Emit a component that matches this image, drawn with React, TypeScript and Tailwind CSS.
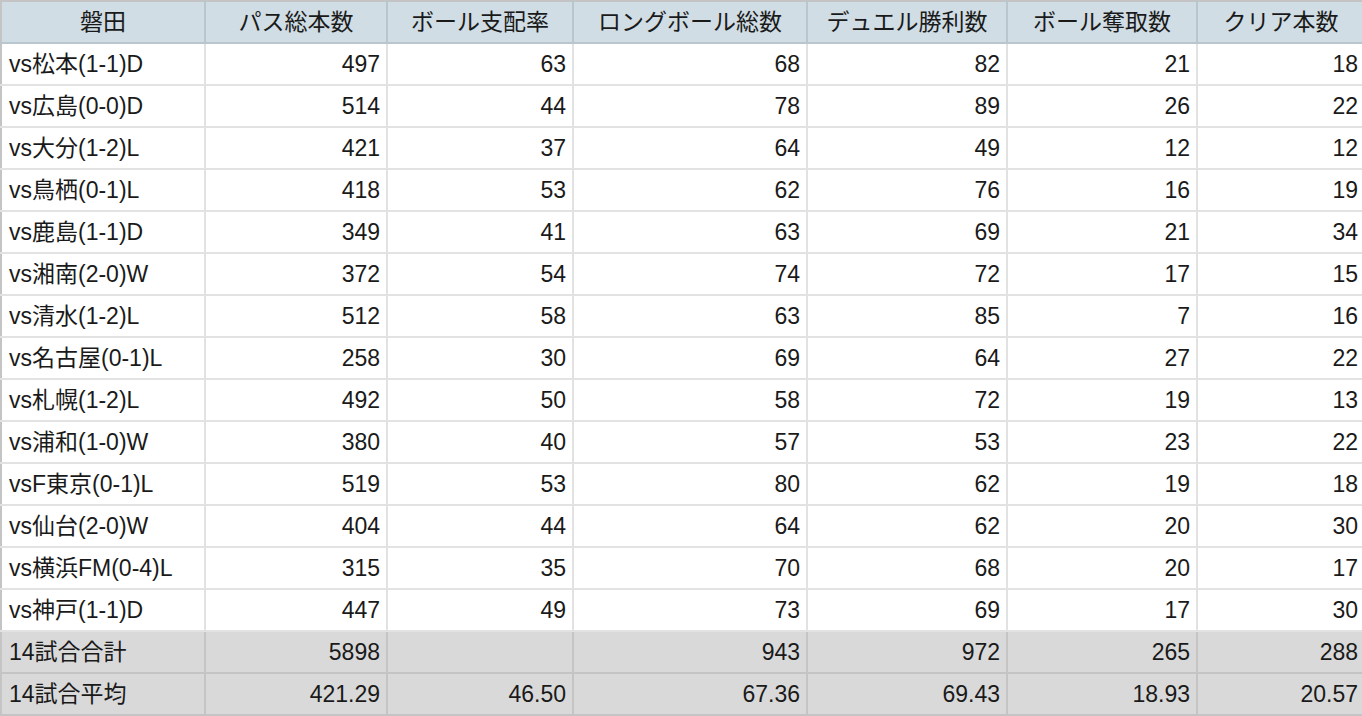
import React from 'react'

type Row = { name: string; vals: (string | number)[] }

const HEADERS = ['磐田', 'パス総本数', 'ボール支配率', 'ロングボール総数', 'デュエル勝利数', 'ボール奪取数', 'クリア本数']

const ROWS: Row[] = [
  { name: 'vs松本(1-1)D', vals: [497, 63, 68, 82, 21, 18] },
  { name: 'vs広島(0-0)D', vals: [514, 44, 78, 89, 26, 22] },
  { name: 'vs大分(1-2)L', vals: [421, 37, 64, 49, 12, 12] },
  { name: 'vs鳥栖(0-1)L', vals: [418, 53, 62, 76, 16, 19] },
  { name: 'vs鹿島(1-1)D', vals: [349, 41, 63, 69, 21, 34] },
  { name: 'vs湘南(2-0)W', vals: [372, 54, 74, 72, 17, 15] },
  { name: 'vs清水(1-2)L', vals: [512, 58, 63, 85, 7, 16] },
  { name: 'vs名古屋(0-1)L', vals: [258, 30, 69, 64, 27, 22] },
  { name: 'vs札幌(1-2)L', vals: [492, 50, 58, 72, 19, 13] },
  { name: 'vs浦和(1-0)W', vals: [380, 40, 57, 53, 23, 22] },
  { name: 'vsF東京(0-1)L', vals: [519, 53, 80, 62, 19, 18] },
  { name: 'vs仙台(2-0)W', vals: [404, 44, 64, 62, 20, 30] },
  { name: 'vs横浜FM(0-4)L', vals: [315, 35, 70, 68, 20, 17] },
  { name: 'vs神戸(1-1)D', vals: [447, 49, 73, 69, 17, 30] },
]

const FOOTER: Row[] = [
  { name: '14試合合計', vals: [5898, '', 943, 972, 265, 288] },
  { name: '14試合平均', vals: ['421.29', '46.50', '67.36', '69.43', '18.93', '20.57'] },
]

export default function App() {
  return (
    <div className="w-[1362px] h-[716px] overflow-hidden bg-white text-[#1a1a1a] font-['Liberation_Sans','Noto_Sans_CJK_JP',sans-serif] text-[23px]">
      <table className="table-fixed border-collapse w-[1364px]">
        <colgroup>
          <col className="w-[204px]" />
          <col className="w-[182px]" />
          <col className="w-[186px]" />
          <col className="w-[234px]" />
          <col className="w-[200px]" />
          <col className="w-[190px]" />
          <col className="w-[168px]" />
        </colgroup>
        <thead>
          <tr className="bg-[#d0dde4]">
            {HEADERS.map((h, i) => (
              <th
                key={i}
                className={`h-[42px] border-2 border-[#b9c6cd] border-t-[#c4c4c4] font-normal text-center p-0 ${i === 0 ? 'border-l-[#c4c4c4]' : ''}`}
              >
                {h}
              </th>
            ))}
          </tr>
        </thead>
        <tbody>
          {ROWS.map(r => (
            <tr key={r.name}>
              <td className="h-[42px] border-2 border-[#e2e2e2] border-l-[#c4c4c4] pl-[7px] pr-[6px] whitespace-nowrap">{r.name}</td>
              {r.vals.map((v, j) => (
                <td key={j} className="h-[42px] border-2 border-[#e2e2e2] text-right px-[6px]">{v}</td>
              ))}
            </tr>
          ))}
          {FOOTER.map(r => (
            <tr key={r.name} className="bg-[#d9d9d9]">
              <td className="h-[42px] border-2 border-[#c4c4c4] pl-[7px] pr-[6px] whitespace-nowrap">{r.name}</td>
              {r.vals.map((v, j) => (
                <td key={j} className="h-[42px] border-2 border-[#c4c4c4] text-right px-[6px]">{v}</td>
              ))}
            </tr>
          ))}
        </tbody>
      </table>
    </div>
  )
}
